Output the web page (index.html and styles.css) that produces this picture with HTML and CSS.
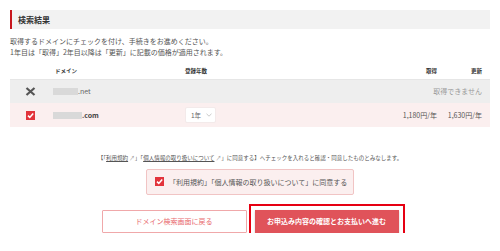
FILE: index.html
```html
<!DOCTYPE html>
<html lang="ja">
<head>
  <meta charset="UTF-8">
  <title>検索結果</title>
  <link rel="stylesheet" href="styles.css">
</head>
<body>
  <div class="section">
    <h2 class="section-title">検索結果</h2>
    <p class="lead">取得するドメインにチェックを付け、手続きをお進めください。<br>1年目は「取得」2年目以降は「更新」に記載の価格が適用されます。</p>

    <table class="result-table">
      <colgroup>
        <col class="col-check">
        <col class="col-domain">
        <col class="col-year">
        <col class="col-get">
        <col class="col-renew">
      </colgroup>
      <thead>
        <tr>
          <th></th>
          <th class="th-domain">ドメイン</th>
          <th class="th-year">登録年数</th>
          <th class="num">取得</th>
          <th class="num last">更新</th>
        </tr>
      </thead>
      <tbody>
        <tr class="row-ng">
          <td class="check">
            <svg width="11" height="9" viewBox="0 0 11 9"><path d="M1.5 1 L9.5 8 M9.5 1 L1.5 8" stroke="#555" stroke-width="2.2" fill="none"/></svg>
          </td>
          <td class="domain"><span class="mask w25"></span>.net</td>
          <td></td>
          <td class="num last na" colspan="2">取得できません</td>
        </tr>
        <tr class="row-ok">
          <td class="check">
            <svg width="9" height="9" viewBox="0 0 9 9"><rect width="9" height="9" fill="#e2343c"/><path d="M2 4.6 L3.8 6.4 L7.2 2.4" stroke="#fff" stroke-width="1.5" fill="none"/></svg>
          </td>
          <td class="domain bold"><span class="mask w29"></span>.com</td>
          <td><span class="select">1年 <svg width="6" height="4" viewBox="0 0 6 4"><path d="M0.5 0.8 L3 3.2 L5.5 0.8" stroke="#bbb" stroke-width="0.8" fill="none"/></svg></span></td>
          <td class="num">1,180円/年</td>
          <td class="num last">1,630円/年</td>
        </tr>
      </tbody>
    </table>

    <p class="notice">【「<a href="#">利用規約</a> <span class="ext">↗</span>」「<a href="#">個人情報の取り扱いについて</a> <span class="ext">↗</span>」に同意する】へチェックを入れると確認・同意したものとみなします。</p>

    <div class="agree-wrap">
      <label class="agree">
        <svg width="9" height="9" viewBox="0 0 9 9"><rect width="9" height="9" fill="#e2343c"/><path d="M2 4.6 L3.8 6.4 L7.2 2.4" stroke="#fff" stroke-width="1.5" fill="none"/></svg>
        「利用規約」「個人情報の取り扱いについて」に同意する
      </label>
    </div>

    <div class="action-buttons">
      <a href="#" class="back-btn">ドメイン検索画面に戻る</a>
      <a href="#" class="next-btn">お申込み内容の確認とお支払いへ進む</a>
    </div>
  </div>
</body>
</html>
```

FILE: styles.css
```css
* {
  margin: 0;
  padding: 0;
  box-sizing: border-box;
}

body {
  font-family: "Noto Sans CJK JP", "Liberation Sans", sans-serif;
  background-color: #fff;
  color: #555;
  width: 500px;
}

.section {
  padding: 10px 10px 0;
}

.section-title {
  height: 19px;
  line-height: 19px;
  background-color: #f2f2f2;
  border-left: 2px solid #c8161d;
  padding-left: 6px;
  font-size: 8px;
  font-weight: bold;
  color: #333;
}

.lead {
  margin-top: 7px;
  font-size: 7px;
  line-height: 11px;
  color: #555;
}

.result-table {
  margin-top: 5px;
  width: 480px;
  border-collapse: collapse;
  table-layout: fixed;
  font-size: 7px;
}

.col-check { width: 40px; }
.col-domain { width: 130px; }
.col-year { width: 210px; }
.col-get { width: 50px; }
.col-renew { width: 50px; }

.result-table th {
  height: 16px;
  font-size: 5.5px;
  font-weight: bold;
  color: #333;
  text-align: left;
  border-bottom: 1px solid #e6e6e6;
}

.th-domain {
  padding-left: 5px;
}

.th-year {
  padding-left: 5px;
  font-size: 4px;
}

.result-table td {
  height: 24px;
  vertical-align: middle;
}

.result-table .num {
  text-align: right;
  padding-right: 3px;
}

.result-table .last {
  padding-right: 8px;
}

.row-ng {
  background-color: #eeeeee;
}

.row-ok {
  background-color: #fbefef;
}

.check {
  text-align: center;
  line-height: 0;
}

.domain {
  padding-left: 3px;
  color: #666;
}

.bold {
  font-weight: bold;
  color: #444;
}

.mask {
  display: inline-block;
  height: 7px;
  background-color: #d9d9d9;
  vertical-align: -1px;
  filter: blur(0.4px);
}

.w25 { width: 25px; }
.w29 { width: 29px; }

.na {
  color: #999;
}

.select {
  display: inline-flex;
  align-items: center;
  gap: 5px;
  margin-left: 5px;
  width: 31px;
  height: 16px;
  padding-left: 5px;
  background-color: #fff;
  border: 1px solid #f3eaea;
  border-radius: 2px;
  color: #666;
  font-size: 6.5px;
}

.notice {
  margin-top: 27px;
  text-align: center;
  font-size: 5.5px;
  line-height: 8px;
  color: #555;
}

.notice a {
  color: #555;
  text-decoration: underline;
}

.ext {
  color: #999;
}

.agree-wrap {
  margin-top: 5px;
  text-align: center;
}

.agree {
  display: inline-flex;
  align-items: center;
  gap: 5px;
  width: 208px;
  height: 26px;
  padding-left: 8px;
  background-color: #fbefef;
  border: 1px solid #f1c4c4;
  border-radius: 2px;
  font-size: 7px;
  color: #555;
}

.action-buttons {
  margin-top: 15px;
  display: flex;
  justify-content: center;
  gap: 8px;
}

.back-btn,
.next-btn {
  display: flex;
  align-items: center;
  justify-content: center;
  width: 145px;
  height: 23px;
  font-size: 7px;
  text-decoration: none;
  border-radius: 1px;
}

.back-btn {
  border: 1px solid #f0a8aa;
  color: #e8686d;
  background-color: #fff;
}

.next-btn {
  width: 144px;
  border-radius: 0;
  background-color: #e0535a;
  color: #fff;
  font-weight: bold;
  box-shadow: 0 1px 2px rgba(0,0,0,0.2);
  outline: 2px solid #e60012;
  outline-offset: 4px;
}
```
